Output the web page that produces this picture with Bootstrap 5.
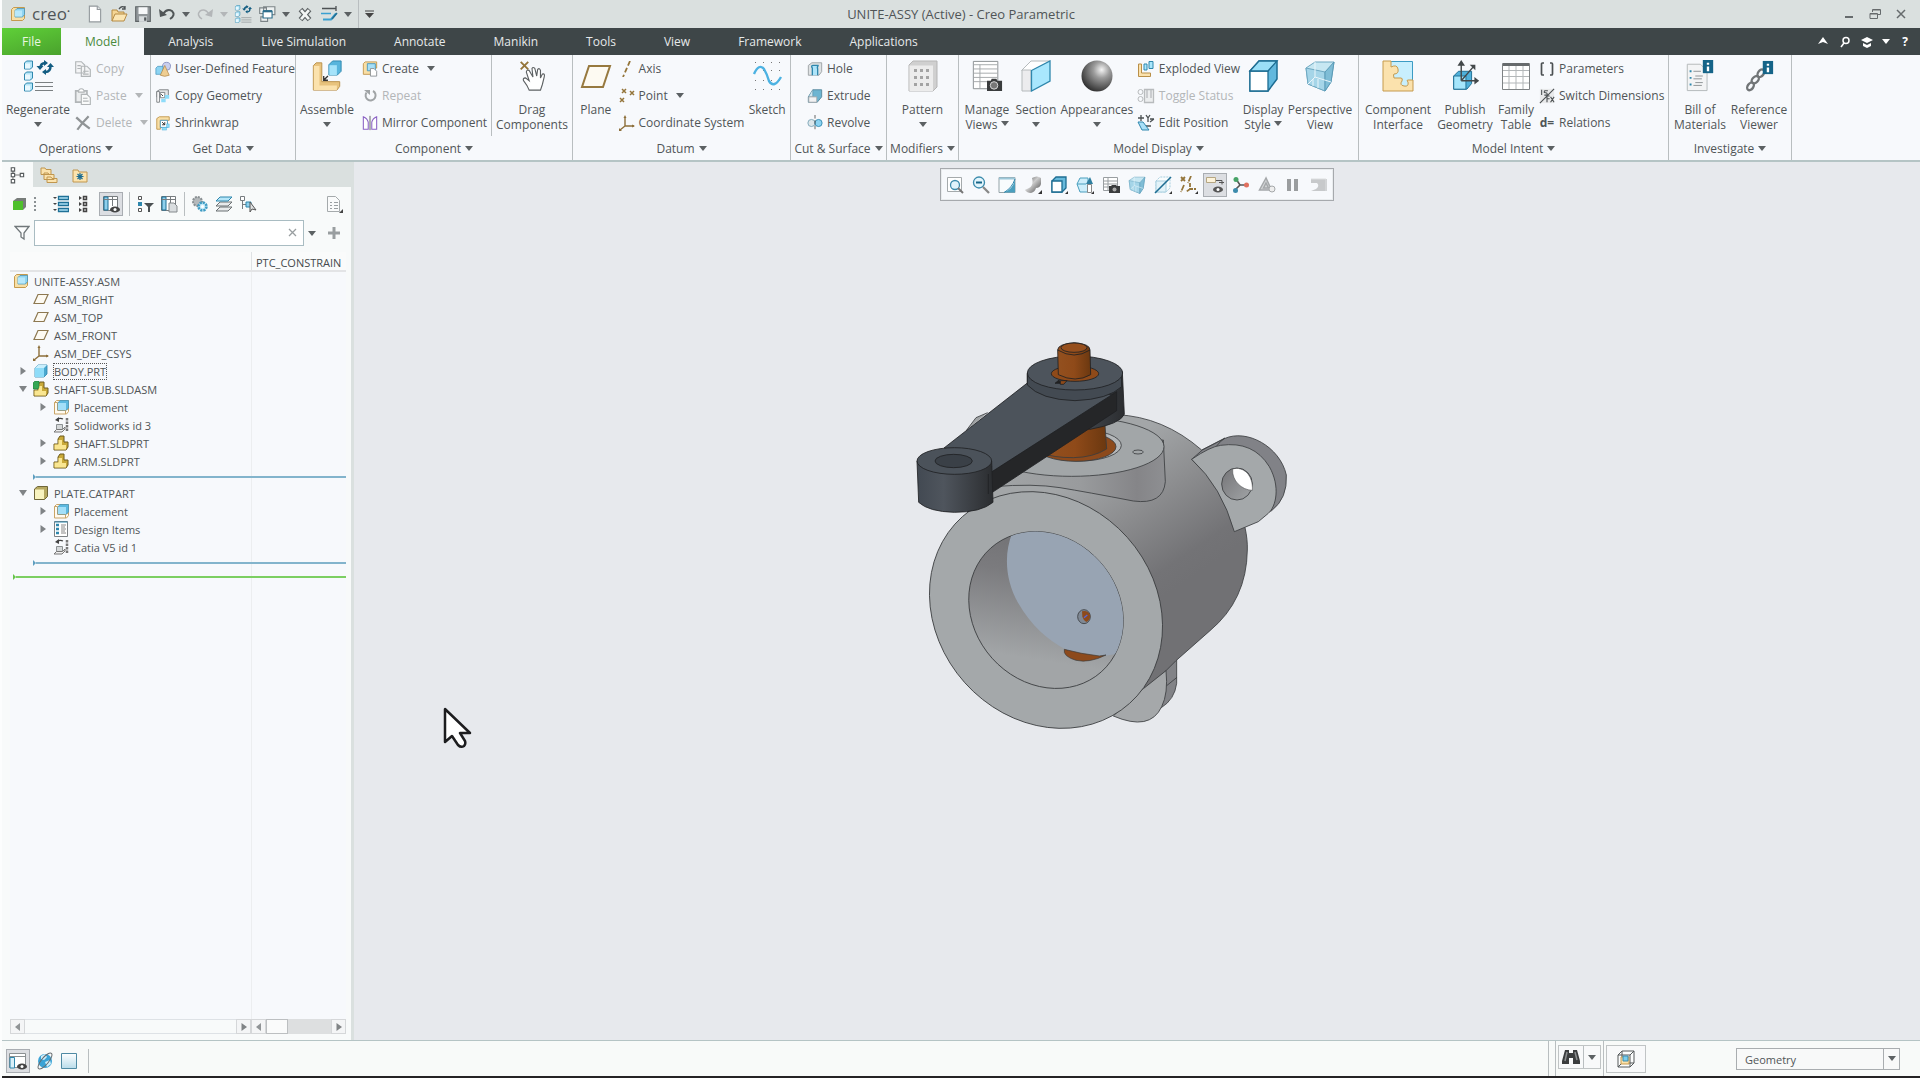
<!DOCTYPE html>
<html lang="en">
<head>
<meta charset="utf-8">
<meta name="viewport" content="width=device-width, initial-scale=1">
<title>UNITE-ASSY (Active) - Creo Parametric</title>
<link href="https://cdn.jsdelivr.net/npm/bootstrap@5.3.0/dist/css/bootstrap.min.css" rel="stylesheet">
<style>
:root{--ink:#505557;--panel:#f8fafa;--rib:#f7f9fc;--bar:#dae0df;--line:#b5c4c5}
body{font-family:"Open Sans","Noto Sans",sans-serif;font-size:12px;line-height:15px;color:var(--ink);background:#fcfdfd}
button{background:none;border:0;padding:0;color:inherit;font:inherit}
svg{flex:none;display:block}
.app-shell{border-bottom:2px solid #252325;margin-left:2px}
.i16{width:16px;height:16px}.i18{width:18px;height:18px}.i32{width:32px;height:32px}
.tri{display:inline-block;width:0;height:0;border:4px solid transparent;border-top:5px solid #5c6163;border-bottom:0;flex:none}
.dim{color:#b3b6b8}.dim .tri{border-top-color:#b3b6b8}
.titlebar{background:var(--bar);height:28px}
.titlebar h1{font-size:13px;line-height:28px}
.qat{left:8px;top:0;height:28px;gap:6px}
.brand{font-size:17px;line-height:24px;width:48px}
.brand sup{font-size:8px;top:-6px}
.duo{gap:6px}
.wc{right:13px;top:0;height:28px;gap:14px}
.menubar{background:#3e4648;height:27px}
.menubar a{color:#e6e9ea;text-decoration:none;line-height:28px;height:27px;padding:0 24px}
.menubar a.m-file{background:linear-gradient(165deg,#5fd038,#4aa22d);padding:0 20px;color:#e9f7e0}
.menubar a.m-on{background:var(--rib);color:#4a8a3c}
.ribbon{background:var(--rib);height:107px;border-bottom:2px solid var(--line)}
.rgroup{border-right:1px solid #b9bec0}
.rbody{height:81px}
.rfoot{height:25px;gap:4px}
.big{padding-top:5px;display:flex;flex-direction:column;align-items:center;text-align:center}
.big .lbl{margin-top:10px}
.big > .tri{margin-top:5px}
.big .lbl .tri{margin-bottom:3px}
.sm{display:flex;align-items:center;gap:4px;height:27px;white-space:nowrap}
.sm .tri{margin-left:4px}
.vsep{width:1px;background:#b9bec0}
.w42{width:42px}.w46{width:46px}.w50{width:50px}.w56{width:56px}.w62{width:62px}.w68{width:68px}.w72{width:72px}.w78{width:78px}.w80{width:80px}
.g-ops{width:149px}.g-get{width:145px}.g-comp{width:277px}.g-dat{width:218px}.g-cut{width:96px}.g-mod{width:72px}.g-disp{width:400px}.g-int{width:310px}.g-inv{width:123px}
.work{height:calc(100vh - 200px);min-height:600px}
.side{width:352px;background:var(--panel);border-right:3px solid var(--bar)}
.sidetabs{background:var(--bar);height:25px}
.sidetabs button{width:31px;display:flex;align-items:center;justify-content:center}
.sidetabs button.on{background:var(--panel)}
.sidetools{height:33px;padding-left:9px;gap:6px}
.tog{background:#dcdee2;border:1px solid #a9adb2;width:24px;height:24px;display:flex;align-items:center;justify-content:center}
.tool-sep{width:1px;height:24px;background:#b9bec0}
.findrow{height:26px;padding-left:12px;gap:4px}
.findbox{border:1px solid #a9bcc2;background:#fff;width:270px;height:26px;position:relative}
.findbox input{border:0;width:100%;height:24px;padding:0 24px 0 6px;outline:0;background:transparent}
.findbox button{position:absolute;right:6px;top:4px}
.tree{margin:6px 5px 0 8px;background:var(--rib);font-size:11px}
.thead{height:20px;border-bottom:2px solid #e3e4e6;background:#fafbfb;color:#454a4c}
.thead div:last-child{width:95px;border-left:1px solid #dfe2e4;padding:3px 0 0 4px;white-space:nowrap}
.tbody-area{background:linear-gradient(90deg,transparent calc(100% - 95px),#eceef0 calc(100% - 95px),#eceef0 calc(100% - 94px),transparent calc(100% - 94px))}
.tree ul{list-style:none;margin:0;padding:0}
.tree li{display:flex;align-items:center;height:18px;gap:5px}
.l0{padding-left:3px}.l1{padding-left:7px}.l2{padding-left:27px}
.arw{width:11px;height:18px;display:flex;align-items:center;justify-content:center}
.arw svg{width:8px;height:8px}
.focus-name{outline:1px dotted #555;line-height:15px}
.ins{height:14px;padding-left:23px;display:flex;align-items:center}
.ins.root{padding-left:3px}
.ins i{width:0;height:0;border:3px solid transparent;border-left:3px solid #5f9fc0;border-right:0}
.ins b{flex:1;height:2px;background:#83b4cc}
.ins.root i{border-left-color:#67c44b}.ins.root b{background:#7ccf62}
.sbar{height:15px;margin:0 5px 6px 8px}
.sbar .bx{border:1px solid #d5d7d9;display:flex;align-items:center;justify-content:center;width:15px;background:#f4f5f6}
.sbar .thumb{width:22px;border:1px solid #bcbfc1;background:#fafbfb}
.sbar .trk{width:43px;background:#dddfe0}
.canvas-area{background:#e7e9ed}
.viewbar{margin-top:6px;border:1px solid #a6a9ad;background:var(--rib);height:33px;padding:0 1px;box-shadow:inset 0 0 0 1px #e9ecee}
.viewbar button{width:26px;height:24px;display:flex;align-items:center;justify-content:center}
.viewbar button.tog{width:24px;margin:0 1px}
.assy{position:absolute;left:calc(50% - 237px);top:158px;width:420px;height:420px}
.ptr{position:absolute;left:89px;top:545px;width:30px;height:42px}
.status{height:36px;border-top:1px solid var(--line);background:#f8faf9}
.stleft{gap:6px;padding:4px 0 0 4px}
.stbtn{border:1px solid #c0c4c5;background:#f8f9fa;display:flex;align-items:center;justify-content:center}
.stright{gap:2px}
.geo{width:164px;height:22px;border:1px solid #a9adb0;background:linear-gradient(#a9adb0,#a9adb0) calc(100% - 15px) 0/1px 100% no-repeat,#f8f9f9;appearance:none;padding:0 8px;color:var(--ink);font-size:11px;border-radius:0}
.geobox{position:relative;margin:7px 20px 0 88px}
.geobox .tri{position:absolute;right:4px;top:8px;pointer-events:none}
</style>
<script src="https://cdn.jsdelivr.net/npm/bootstrap@5.3.0/dist/js/bootstrap.bundle.min.js"></script>
</head>
<body>
<svg width="0" height="0" class="position-absolute" aria-hidden="true">
<defs>
<radialGradient id="gS" cx=".65" cy=".3" r=".75"><stop offset="0" stop-color="#f4f4f4"/><stop offset=".35" stop-color="#9c9c9c"/><stop offset="1" stop-color="#2e2e2e"/></radialGradient>
<linearGradient id="gM" x1="0" y1="0" x2="1" y2="1"><stop offset="0" stop-color="#555"/><stop offset=".45" stop-color="#ccc"/><stop offset="1" stop-color="#444"/></linearGradient>
<linearGradient id="gW" x1="0" y1="0" x2="0" y2="1"><stop offset="0" stop-color="#fff"/><stop offset="1" stop-color="#b9dcea"/></linearGradient>
</defs>
<symbol id="cube" viewBox="0 0 16 16"><path d="M2 5l3-3h9v9l-3 3H2z" fill="#4aa8cf" stroke="#2c86ae" stroke-width=".8"/><path d="M2 5l3-3h9l-3 3z" fill="#c9effd"/><path d="M2 5h9v9H2z" fill="#8fdcf8"/></symbol>
<symbol id="asm" viewBox="0 0 16 16"><path d="M1.500 3.500l2-2h11v11l-2 2h-11z" fill="#f8dfa6" stroke="#c59a4d"/><path d="M5 4.500l2-2h7.500v6l-2 2.500H5z" fill="#8fd4f2" stroke="#4795bb" stroke-width=".8"/><path d="M5 4.500h7v6H5z" fill="#b8e8fb"/></symbol>
<symbol id="plc" viewBox="0 0 16 16"><path d="M1.500 3.500l2-2h12v11l-2 2.500h-12zM1.500 3.500h3v8h8l3-2M12.500 11.500V15" fill="#fffaf0" stroke="#c9a566"/><path d="M5 4l2-2.500h8.500V9l-2 2H5z" fill="#5cb9e0" stroke="#4795bb" stroke-width=".8"/><path d="M5 4h8v7H5z" fill="#a3dff8"/></symbol>
<symbol id="page" viewBox="0 0 16 16"><path d="M3 1h7l3 3v11H3z" fill="#fff" stroke="#93999d"/><path d="M10 1v3h3" fill="#e5e8ea" stroke="#93999d"/></symbol>
<symbol id="open" viewBox="0 0 18 18"><path d="M2 16V5h5l1 2h6v3" fill="#f5d695" stroke="#b58b45"/><path d="M2 16l3-7h12l-3 7z" fill="#fbe6b4" stroke="#b58b45"/><path d="M9 4q3-4 6-1m0-2v3h-3" fill="none" stroke="#4d5254" stroke-width="1.300"/></symbol>
<symbol id="save" viewBox="0 0 16 16"><path d="M1.500 1.500h13v13h-13z" fill="#91979a" stroke="#5f6567"/><path d="M4 2h8v6H4z" fill="#f7f9fa"/><path d="M4.500 10h7v5h-7z" fill="#d7dcde"/><path d="M9 11h2v3H9z" fill="#555b5d"/></symbol>
<symbol id="undo" viewBox="0 0 18 16"><path d="M5 8q4-6 9-3 4 4-2 8" fill="none" stroke="currentColor" stroke-width="2"/><path d="M1 3l1 8 7-2z" fill="currentColor"/></symbol>
<symbol id="redo" viewBox="0 0 18 16"><path d="M13 8Q9 2 4 5q-4 4 2 8" fill="none" stroke="currentColor" stroke-width="1.500"/><path d="M17 3l-1 8-7-2z" fill="currentColor"/></symbol>
<symbol id="regen" viewBox="0 0 32 32"><g stroke="#2f87ad" fill="#b5e6f9"><path d="M2.500 3l2-2h6v6l-2 2h-6zM2.500 14l2-2h6v6l-2 2h-6zM2.500 25l2-2h6v6l-2 2h-6z"/></g><path d="M3 3.500h5v5H3zM3 14.500h5v5H3zM3 25.500h5v5H3z" fill="#e9f8fe"/><path d="M13 22.500h18M13 26.500h18M13 30.500h18" stroke="#7b8082"/><path d="M18.500 8q0-5 5-5M28.500 6q0 6-5 6" fill="none" stroke="#135d82" stroke-width="2.500"/><path d="M22 0v6l4-3zM24 15V9l-4 3zM14.500 6h7l-3.500 4zM25 7h7l-3.500-4z" fill="#135d82"/></symbol>
<symbol id="wins" viewBox="0 0 16 16"><path d="M5 1.500h10v7H5zM1.500 2.500h6v5h-6zM2.500 10.500h6v4h-6z" fill="#edf1f1" stroke="#7c8487"/><path d="M4.500 5.500h8v6h-8z" fill="#fff" stroke="#2d6e8c"/><path d="M4.500 5.500h8" stroke="#2d6e8c" stroke-width="2"/></symbol>
<symbol id="closew" viewBox="0 0 16 16"><path d="M4 4l8 9M12 4l-8 9" stroke="#5c6163" stroke-width="4.500"/><path d="M4.500 4.500l7 8M11.500 4.500l-7 8" stroke="#f3f5f5" stroke-width="2.500"/></symbol>
<symbol id="sect" viewBox="0 0 18 16"><path d="M2 2.500h14M16 0v5" stroke="#4c5153" stroke-width="1.300"/><path d="M1 7.500h10" stroke="#3aa0d1" stroke-width="1.500"/><path d="M3 13.500h8l5-6" stroke="#3aa0d1" stroke-width="2" fill="none"/><path d="M12 13l5-6" stroke="#236f93" stroke-width="1.500"/></symbol>
<symbol id="copy" viewBox="0 0 16 16"><path d="M1.500 1.500h5l3 3v7h-8zM6.500 5.500h5l3 3v6h-8z" fill="#f4f5f6" stroke="#b1b5b7"/><path d="M3 5h3M3 7.500h3M8 10h5M8 12.500h5" stroke="#b1b5b7"/></symbol>
<symbol id="paste" viewBox="0 0 16 16"><path d="M1.500 3.500h10v10h-10z" fill="#eceeef" stroke="#b1b5b7" stroke-width="1.500"/><path d="M4 4.500q0-3 2.500-3T9 4.500z" fill="#fff" stroke="#b1b5b7"/><path d="M6.500 6.500h5l3 3v6h-8z" fill="#f9fafa" stroke="#b1b5b7"/><path d="M8 10h4M8 12.500h5" stroke="#b1b5b7"/></symbol>
<symbol id="del" viewBox="0 0 16 16"><path d="M2 3q5 5 12 10M13 2Q7 8 3 14" stroke="#909496" stroke-width="2" fill="none"/></symbol>
<symbol id="udf" viewBox="0 0 18 18"><circle cx="13" cy="6" r="4.500" fill="#c9cfee" stroke="#8790bf"/><path d="M1 8l2-2h6v7l-2 2H1z" fill="#8cd4f3" stroke="#4795bb" stroke-width=".8"/><path d="M11 5l5 11q-5 2.500-10 0z" fill="#efce92" stroke="#ae8646" stroke-width=".8"/></symbol>
<symbol id="cgeo" viewBox="0 0 18 18"><path d="M2 4l3-2h10v8H2z" fill="#e4e6e7" stroke="#777c7f"/><path d="M2 4h3v12H2zM6 5h5v6H6z" fill="#fff" stroke="#777c7f"/><path d="M7 7l2 2" stroke="#222"/><path d="M11 8h5v4h-4v4H7v-4h4z" fill="#8edcf9"/></symbol>
<symbol id="shr" viewBox="0 0 18 18"><path d="M2 4l3-2h11v4H6v10H2z" fill="#f9dfa5" stroke="#c09549"/><path d="M6 6h8v8H6z" fill="#fff" stroke="#4795bb"/><path d="M8 8l3 3m0-3v3H8" stroke="#222" fill="none"/><path d="M13 10h3v4h-3v3H8v-3h5z" fill="#8edcf9" stroke="#4cb0da" stroke-width=".5"/></symbol>
<symbol id="assem" viewBox="0 0 32 34"><path d="M1.500 6l3-3h6v20h19v5l-3 4h-25z" fill="#e8c37d" stroke="#b98f48"/><path d="M2 6.500h6V27h18.500v5H2z" fill="#fbe2ad"/><path d="M18 5l4-4h9v11l-4 4h-9z" fill="#58b5dd" stroke="#2c86ae"/><path d="M18.500 5.500h8V16h-8z" fill="#a5e3fa"/><path d="M17 17l-4 4m-.5-4v4.500H17" fill="none" stroke="#333" stroke-width="1.400"/></symbol>
<symbol id="creat" viewBox="0 0 18 18"><path d="M1.500 3l2-2h13v7h-5v7h-10z" fill="#f9dfa5" stroke="#c09549"/><path d="M6 3h9v8H6z" fill="#a5dff7" stroke="#4795bb"/><path d="M9.500 8.500h4l3 3v5.500h-7z" fill="#fff" stroke="#888e91"/></symbol>
<symbol id="rept" viewBox="0 0 16 16"><path d="M11 3a5 5 0 1 1-6.500 1.500" fill="none" stroke="#a0a4a6" stroke-width="2"/><path d="M2 2h6v5z" fill="#a0a4a6"/></symbol>
<symbol id="mirr" viewBox="0 0 18 18"><path d="M1.500 2v14H7V8Q6 4 1.500 2zM16.500 2v14H11V8q1-4 5.500-6z" fill="#fff" stroke="#8b62c4" stroke-width="1.200"/><path d="M9 1v16" stroke="#555"/></symbol>
<symbol id="drag" viewBox="0 0 32 34"><path d="M4 2l8 8M12 2l-8 8" stroke="#94753a" stroke-width="2"/><path d="M13 32q-2-5-6-10-1-3 2-3l4 3-3-9q0-3 3-2l4 7-1-9q1-2 3 0l2 8 1-7q2-2 3 1l0 8 2-4q3-1 2 3l-2 8-2 6z" fill="#fff" stroke="#5d6163" stroke-width="1.200"/></symbol>
<symbol id="plane" viewBox="0 0 32 32"><path d="M9 6h21L23 27H2z" fill="#fdfaf2" stroke="#97793f" stroke-width="2"/></symbol>
<symbol id="plane2" viewBox="0 0 16 16"><path d="M5 3.500h10L11 12.500H1z" fill="#fdfaf2" stroke="#8d7850" stroke-width="1.200"/></symbol>
<symbol id="axis" viewBox="0 0 16 16"><path d="M11 0L4 16" stroke="#94753a" stroke-width="1.800" stroke-dasharray="5 2.500"/></symbol>
<symbol id="point" viewBox="0 0 16 16"><path d="M3 1l4 4M7 1L3 5M11 3l4 4m0-4l-4 4M1 10l4 4m0-4l-4 4" stroke="#94753a" stroke-width="1.500"/></symbol>
<symbol id="csys" viewBox="0 0 16 16"><path d="M6 2v9h9M6 11l-5 4" fill="none" stroke="#8d6f3a" stroke-width="1.400"/><path d="M4.500 3L6 0l1.500 3zM13 9.500l3 1.500-3 1.500zM0 13v3h3z" fill="#8d6f3a"/></symbol>
<symbol id="sketch" viewBox="0 0 32 32"><g fill="#777"><path d="M4 2h1v1H4zM12 2h1v1h-1zM20 2h1v1h-1zM28 2h1v1h-1zM4 10h1v1H4zM12 10h1v1h-1zM20 10h1v1h-1zM28 10h1v1h-1zM4 20h1v1H4zM12 20h1v1h-1zM20 20h1v1h-1zM28 20h1v1h-1zM4 29h1v1H4zM12 29h1v1h-1zM20 29h1v1h-1zM28 29h1v1h-1z"/></g><path d="M3 14q5-11 10-5 3 5 5 12 5 8 12-4" fill="none" stroke="#4cb2e2" stroke-width="2.400"/></symbol>
<symbol id="hole" viewBox="0 0 18 18"><path d="M1.500 5l4-3h11v10l-3 4h-12z" fill="#dfe2e3" stroke="#9a9fa2"/><path d="M6 16V8q-2-3 1-3h6q-2 1-1 4v7" fill="#aee4f9" stroke="#2f87ad" stroke-width="1.500"/></symbol>
<symbol id="extr" viewBox="0 0 18 18"><path d="M1.500 10l5-8h10v8l-5 6h-10z" fill="#6db5d1" stroke="#53859a"/><path d="M6.500 2v8H2" fill="#cfe8f2" stroke="#53859a" stroke-width=".6"/><path d="M2 10h9v6H2z" fill="#f1f2f3" stroke="#a2a7a9"/></symbol>
<symbol id="revo" viewBox="0 0 18 18"><circle cx="5" cy="9" r="4" fill="#dce6ea" stroke="#79a4b6"/><circle cx="13" cy="9" r="4" fill="#8bd3f2" stroke="#2f87ad"/><path d="M9 0v18" stroke="#555" stroke-dasharray="4 2"/></symbol>
<symbol id="patt" viewBox="0 0 32 32"><path d="M2 5l4-4h24v26l-4 4H2z" fill="#d0d0d0" stroke="#b5b5b5"/><path d="M2.500 5.500H26V31H2.500z" fill="#ececec"/><path d="M7 9h3v3H7zM13 9h3v3h-3zM19 9h3v3h-3zM7 16h3v3H7zM13 16h3v3h-3zM19 16h3v3h-3zM7 23h3v3H7zM13 23h3v3h-3zM19 23h3v3h-3z" fill="#a3a3a3"/></symbol>
<symbol id="mview" viewBox="0 0 32 34"><path d="M1.500 1.500h26v29h-26z" fill="#fff" stroke="#888d90"/><path d="M2 5h25M2 9.500h25M2 14h25M2 18.500h25M2 23h25M8.500 5v25" stroke="#a3a8aa"/><path d="M16 22h4l1-2h5l1 2h5v11H16z" fill="#3a3c3d"/><circle cx="23.500" cy="27" r="4" fill="#777" stroke="#ddd"/></symbol>
<symbol id="section" viewBox="0 0 32 32"><path d="M2 10L11 1h19L12 11H2z" fill="#fff" stroke="#b5babc"/><path d="M2 10h9v21H2z" fill="#ececee" stroke="#b5babc"/><path d="M11.500 10.500L30 1v20L11.500 31z" fill="#a9e7fd" stroke="#2f87ad" stroke-width="1.300"/></symbol>
<symbol id="ball" viewBox="0 0 32 32"><circle cx="16" cy="16" r="15.500" fill="url(#gS)"/></symbol>
<symbol id="expl" viewBox="0 0 18 18"><path d="M1.500 4H4.500v9h9v3.500h-12z" fill="#fbe2ad" stroke="#b98f48"/><path d="M7 4h3v6H7zM12 1.500h4v7h-4z" fill="#a9e7fd" stroke="#2f87ad"/></symbol>
<symbol id="tstat" viewBox="0 0 18 18"><circle cx="3.500" cy="5" r="2.500" fill="none" stroke="#b8bbbd"/><circle cx="3.500" cy="12" r="2.500" fill="none" stroke="#b8bbbd"/><path d="M7.500 2.500h9v13h-9zM10 3v8M14 3v8" fill="#eceeef" stroke="#b8bbbd" stroke-width="1.300"/></symbol>
<symbol id="epos" viewBox="0 0 18 18"><path d="M4 1v6M1 4h6M9 1l2 3v4m2-7l-2 3M13 5h4M13 8l4-3M9 12h5" stroke="#4b5052" stroke-width="1.300" fill="none"/><path d="M1 8h5l6 8H5z" fill="#a9e0f8" stroke="#2f87ad"/></symbol>
<symbol id="dstyle" viewBox="0 0 32 32"><path d="M3 11L12 1h18v18L21 31H3z" fill="#62b8dd" stroke="#1e6d92" stroke-width="1.500"/><path d="M3 11h18v20H3z" fill="#fff" stroke="#1e6d92" stroke-width="1.300"/><path d="M3 11L12 1h18l-9 10z" fill="#9adff7" stroke="#1e6d92" stroke-width="1.300"/></symbol>
<symbol id="persp" viewBox="0 0 32 32"><path d="M2 8l9-6h19l-3 20-6 9L4 24z" fill="#c7e7f2" stroke="#6fa9c2"/><path d="M2 8l19 4v19L4 24z" fill="#a5d5e8" stroke="#6fa9c2"/><path d="M21 12l9-10-3 20-6 9z" fill="#7fbdd6" stroke="#5b9bb7"/><path d="M11 2v15l-7 7M11 17l16 5M9 19v7M14 19v9" fill="none" stroke="#eaf6fb"/></symbol>
<symbol id="cint" viewBox="0 0 32 32"><path d="M1.500 1.500h29v29h-29z" fill="#c8effd" stroke="#3c9cc4"/><path d="M1 1h8v6q6-3 7 2t-4 5q-1 0 0 4h7q2 0 1 3-3 4 2 5t4-4q-2-2 0-2h5v11H1z" fill="#fbe2ad" stroke="#c59a4d"/></symbol>
<symbol id="pgeo" viewBox="0 0 32 34"><path d="M4 17l5-5h14v13l-5 6H4z" fill="#4fb0da" stroke="#1e6d92"/><path d="M4 17h13v14H4z" fill="#a5e6fc" stroke="#1e6d92"/><path d="M12 22V4M12 22L25 7M12 22h18" stroke="#43484a" stroke-width="1.500"/><path d="M8 6l4-6 4 6zM21 5h6v6zM26 18l5 4-5 4z" fill="#43484a"/></symbol>
<symbol id="ftab" viewBox="0 0 32 32"><path d="M2.500 3.500h27v26h-27z" fill="#fff" stroke="#7e8284"/><path d="M3 4.500h26" stroke="#666a6c" stroke-width="3"/><path d="M3 10.500h26M3 16.500h26M3 23h26M9 6v23M16 6v23M23 6v23" stroke="#b3b7b9"/></symbol>
<symbol id="para" viewBox="0 0 16 16"><path d="M5 2H3.500Q2.500 2 2.500 3v10q0 1 1 1H5M11 2h1.500q1 0 1 1v10q0 1-1 1H11" fill="none" stroke="#4b5052" stroke-width="1.700"/></symbol>
<symbol id="swd" viewBox="0 0 18 18"><path d="M1 1h16v16H1z" fill="#e9eaeb"/><path d="M1 17L17 1M3 2v6M6 3h4M6 3v2q4 0 3 3H6M9 16V9h3m-3 3h3M13 10l4 6m0-6l-4 6" stroke="#4b5052" stroke-width="1.200" fill="none"/></symbol>
<symbol id="bom" viewBox="0 0 32 34"><path d="M2.500 4.500h14l7 7v21h-21z" fill="#f3f4f5" stroke="#b2b7b9"/><path d="M5 12h2M5 19h2M5 26h2" stroke="#2f87ad" stroke-width="2"/><path d="M9 12h8M11 17h8M9 20h9M11 24h8M9 27h9" stroke="#8b9092"/><path d="M19 0h11v14H19z" fill="#156488"/><path d="M24.500 3v2M24.500 7v5" stroke="#fff" stroke-width="2.500"/></symbol>
<symbol id="refv" viewBox="0 0 32 34"><g fill="none" stroke="#717577" stroke-width="2.500"><ellipse cx="7" cy="28" rx="3" ry="4.500" transform="rotate(35 7 28)"/><ellipse cx="12" cy="21" rx="3" ry="4.500" transform="rotate(45 12 21)"/><ellipse cx="18" cy="14" rx="3" ry="4.500" transform="rotate(35 18 14)"/></g><path d="M20 1h11v14H20z" fill="#156488"/><path d="M25.500 4v2M25.500 8v5" stroke="#fff" stroke-width="2.500"/></symbol>
<symbol id="tmod" viewBox="0 0 16 16"><path d="M3.500 1v12M3 8h8" stroke="#777"/><path d="M2 1.500h3v3H2zM2 6.500h3v3H2zM2 12h3v3H2zM10 6.500h3v3h-3z" fill="#fff" stroke="#565b5d"/></symbol>
<symbol id="fold" viewBox="0 0 18 18"><path d="M1 2h4l1 1.500h5v5H1zM4 7h4l1 1.500h5v5H4zM7 11h4l1 1.500h5v4H7z" fill="#fbe3ae" stroke="#c0964e"/></symbol>
<symbol id="fav" viewBox="0 0 18 18"><path d="M2 4h5l1 2h8v10H2z" fill="#fbe3ae" stroke="#c0964e"/><path d="M9 7v7M5.500 10.500h7M6.500 8l5 5M11.500 8l-5 5" stroke="#1c6d92" stroke-width="1.200"/></symbol>
<symbol id="gcube" viewBox="0 0 16 16"><path d="M2 5l4-3h9v9l-3 3z" fill="#777c79"/><path d="M2 5h10v9H2z" fill="#4fc02c"/></symbol>
<symbol id="lst" viewBox="0 0 18 18"><path d="M7.500 1.500h10v3h-10zM7.500 7.500h10v3h-10zM7.500 13.500h10v3h-10z" fill="#aee0f5" stroke="#1f7197" stroke-width="1.300"/><path d="M2 2h4L4 4zM2 8h4l-2 2zM2 14h4l-2 2z" fill="#444"/></symbol>
<symbol id="lst2" viewBox="0 0 18 18"><path d="M8.500 1.500h3v3h-3zM8.500 7.500h3v3h-3zM8.500 13.500h3v3h-3z" fill="#ddd" stroke="#444" stroke-width="1.500"/><path d="M4 1l3 2-3 2zM4 7l3 2-3 2zM4 13l3 2-3 2z" fill="#444"/></symbol>
<symbol id="cols" viewBox="0 0 18 18"><path d="M1.500 1.500h14v14h-14z" fill="#fff" stroke="#777c7f"/><path d="M2 2h4v13H2z" fill="#8fd0ec" stroke="#1f7197"/><path d="M2 4.500h13M10.500 2v9" stroke="#777c7f"/></symbol>
<symbol id="eye" viewBox="0 0 18 18"><use href="#cols"/><ellipse cx="13" cy="14.500" rx="5" ry="3" fill="#444"/><circle cx="13" cy="14.500" r="1.500" fill="#fff"/></symbol>
<symbol id="navi" viewBox="0 0 18 18"><path d="M.5 1.500h16v14H.5z" fill="#fff" stroke="#8b9092"/><path d="M.5 4.500h16" stroke="#8b9092"/><path d="M1 5.500h4.500V16H1z" fill="#d9eff8" stroke="#2f87ad"/><ellipse cx="13" cy="14.500" rx="5" ry="3" fill="#444"/><circle cx="13" cy="14.500" r="1.500" fill="#fff"/></symbol>
<symbol id="colpg" viewBox="0 0 18 18"><use href="#cols"/><path d="M9 8h5l3 3v6H9z" fill="#d9dddf" stroke="#84898c"/></symbol>
<symbol id="tfil" viewBox="0 0 18 18"><path d="M2.500 1.500h3v3h-3zM2.500 13.500h3v3h-3z" fill="#fff" stroke="#555"/><path d="M2 7h4v4H2z" fill="#2f87ad"/><path d="M8 8h10l-4 4v5h-2v-5z" fill="#4b5052"/></symbol>
<symbol id="gear" viewBox="0 0 18 18"><circle cx="6.500" cy="6.500" r="4.500" fill="#b5b9bb" stroke="#8a9093" stroke-width="2" stroke-dasharray="2 1"/><circle cx="11.500" cy="11.500" r="4" fill="#c6ebf9" stroke="#3f9cc4" stroke-width="2.500" stroke-dasharray="2.200 .9"/><circle cx="11.500" cy="11.500" r="1.500" fill="#fff"/></symbol>
<symbol id="layer" viewBox="0 0 18 18"><path d="M1 16l4-4h12l-4 4zM1 11l4-4h12l-4 4z" fill="#e8eaeb" stroke="#6b7072"/><path d="M1 6l4-4h12l-4 4z" fill="#b5e6f9" stroke="#2f87ad"/></symbol>
<symbol id="tsel" viewBox="0 0 18 18"><path d="M1.500 1.500h4v4h-4zM3.500 6v8M4 9.500h4" fill="#fff" stroke="#777c7f"/><path d="M7 7h5v5H7z" fill="#8fd0ec" stroke="#2f87ad"/><path d="M11 7l6 8-4-1-2 3z" fill="#dfe2e3" stroke="#555"/></symbol>
<symbol id="pglst" viewBox="0 0 18 18"><path d="M2.500 1.500h8l4 4v11h-12z" fill="#fafbfb" stroke="#a5aaac"/><path d="M5 7.500h2M9 7.500h4M5 10.500h2M9 10.500h4M5 13.500h2M9 13.500h4" stroke="#9a9fa2"/><path d="M18 14v4h-4z" fill="#444"/></symbol>
<symbol id="funnel" viewBox="0 0 16 16"><path d="M1 1.500h14L10 8v6l-3-2V8z" fill="#fcfdfd" stroke="#70777a" stroke-width="1.300"/></symbol>
<symbol id="sw" viewBox="0 0 16 16"><path d="M1 9h4V4l2-3h4v6h4v5l-2 3H1z" fill="#c9a938" stroke="#6d5a1e"/><path d="M1.500 9.500h4V5h3.500v5H13v4.500H1.500z" fill="#f9e691"/></symbol>
<symbol id="swa" viewBox="0 0 16 16"><use href="#sw"/><path d="M0 2l2-2h4v6l-1 2H0z" fill="#35a755" stroke="#1c7838" stroke-width=".6"/></symbol>
<symbol id="impf" viewBox="0 0 16 16"><path d="M4 2.500q3-2 6-.5" fill="none" stroke="#444" stroke-width="1.300"/><path d="M2 3l4-3v5z" fill="#444"/><path d="M3.500 7.500h6v5h-6z" fill="#d5d8d9" stroke="#8b9092"/><path d="M1 15l2.500-2.500h6L12 10v2l-3 3z" fill="#eee" stroke="#777"/><path d="M14 1v14" stroke="#777" stroke-width="2.500" stroke-dasharray="2.500 1"/></symbol>
<symbol id="cat" viewBox="0 0 16 16"><path d="M1.500 4l3-2.500h10v10l-3 3h-10z" fill="#b5a860" stroke="#6f6638"/><path d="M2 4.500h9V14H2z" fill="#f8f3bf"/></symbol>
<symbol id="ditem" viewBox="0 0 16 16"><path d="M1.500 .5h13v15h-13z" fill="#fff" stroke="#7c8184"/><path d="M3 4h3M3 8h3M3 12h3" stroke="#2f87ad" stroke-width="2.500"/><path d="M8 4h5M8 6h4M8 8h5M8 10h4M8 12h5" stroke="#888"/><path d="M1.500 1h13" stroke="#2f87ad"/></symbol>
<symbol id="zfit" viewBox="0 0 18 18"><path d="M1.500 1.500h14v14h-14z" fill="#fff" stroke="#a5aaac"/><circle cx="9" cy="9" r="4.500" fill="#dff3fb" stroke="#3c8bac" stroke-width="1.300"/><path d="M12 12l5 5" stroke="#777" stroke-width="2"/></symbol>
<symbol id="zout" viewBox="0 0 18 18"><circle cx="7" cy="6.500" r="5.500" fill="#e3f5fc" stroke="#3c8bac" stroke-width="1.300"/><path d="M4 6.500h6" stroke="#156488" stroke-width="2"/><path d="M11 11l6 6" stroke="#888" stroke-width="2.300"/></symbol>
<symbol id="repnt" viewBox="0 0 18 18"><path d="M1 1.500h16v15H1z" fill="#f8fcfd" stroke="#94a3a9"/><path d="M1 1.500h16v2H1z" fill="#9cc7d8"/><path d="M17 4v12.500H6Q15 13 17 4z" fill="#4a9fbe"/><path d="M17 3Q14 12 6 16.500" stroke="#2f87ad" fill="none"/></symbol>
<symbol id="shade" viewBox="0 0 18 18"><path d="M8 2q5-3 9 0v6q-1 4-5 4-1 4-5 5-4 0-6-3l4-2q5-3 3-10z" fill="url(#gM)"/><path d="M18 14v4h-4z" fill="#333"/></symbol>
<symbol id="wire" viewBox="0 0 18 18"><path d="M2 5l4-4h10v11l-4 4H2z" fill="#67b9db" stroke="#1e6d92" stroke-width="1.300"/><path d="M2 5h10v11H2z" fill="#fff" stroke="#1e6d92" stroke-width="1.300"/><path d="M18 15v3h-3z" fill="#333"/></symbol>
<symbol id="orient" viewBox="0 0 18 18"><path d="M1 8l3-6h8v14H4z" fill="#cdeefb" stroke="#4a9fbe"/><path d="M1 8h9" stroke="#4a9fbe"/><path d="M10 8l4-7 3 7z" fill="#2f7fa0"/><path d="M11.500 8.500h4v8h-4z" fill="#fff" stroke="#888"/><path d="M18 15v3h-3z" fill="#333"/></symbol>
<symbol id="mv2" viewBox="0 0 18 18"><path d="M1.500 1.500h14v13h-14zM2 5h13M2 8h13M2 11h13M6 2v12" fill="#fff" stroke="#999ea1"/><path d="M7 10h2l1-1h4l1 1h3v7H7z" fill="#3a3c3d"/><circle cx="12.500" cy="13.500" r="2" fill="#aaa"/></symbol>
<symbol id="dsec" viewBox="0 0 18 18"><path d="M2 5l4-4h10v11l-4 4H2z" fill="#f8fcfd" stroke="#a8cfdf" stroke-dasharray="2 1"/><path d="M2 5h10v11H2z" fill="#e3f3f9" stroke="#a8cfdf"/><path d="M1 17L17 1" stroke="#1e6d92" stroke-width="1.600"/><path d="M18 15v3h-3z" fill="#333"/></symbol>
<symbol id="dfil" viewBox="0 0 18 18"><path d="M1 1l4 4m0-4L1 5M11 0L8 7M4 9l-3 7" stroke="#94753a" stroke-width="1.800" fill="none" stroke-dasharray="6 1"/><path d="M10 7v6h6M10 13l-4 3" stroke="#94753a" stroke-width="1.800" fill="none" stroke-dasharray="4 1"/><path d="M18 15v3h-3z" fill="#333"/></symbol>
<symbol id="annd" viewBox="0 0 18 18"><path d="M.5 1.500h9v5h-9z" fill="#fdf3da" stroke="#b5a683"/><path d="M10 4.500h6v4m-3-2h5" fill="none" stroke="#555"/><ellipse cx="12" cy="13.500" rx="5" ry="3" fill="#555"/><circle cx="12" cy="13.500" r="1.500" fill="#fff"/></symbol>
<symbol id="spin" viewBox="0 0 18 18"><path d="M4 3l4 6h6M8 9l-5 5" stroke="#555" stroke-width="1.600" fill="none"/><circle cx="4" cy="3.500" r="2.500" fill="#47a367"/><circle cx="14.500" cy="9" r="2.500" fill="#e0705f"/><circle cx="3.500" cy="14.500" r="2.500" fill="#3c8bac"/></symbol>
<symbol id="sim" viewBox="0 0 18 18"><path d="M8 2L1.500 14h12zM8 7l-2.500 5h5z" fill="#d4d6d8" stroke="#a5a8aa" stroke-width="1.500"/><circle cx="14" cy="13" r="3" fill="#eee" stroke="#a5a8aa"/></symbol>
<symbol id="paus" viewBox="0 0 18 18"><path d="M3 3h4v12H3zM10 3h4v12h-4z" fill="#9a9d9f"/></symbol>
<symbol id="simr" viewBox="0 0 18 18"><path d="M1 3h16v12H1l5-2q4-3 1-6H1z" fill="#c7c9cb"/><path d="M1 3h15v12" fill="none" stroke="#dcdee0"/></symbol>
<symbol id="globe" viewBox="0 0 18 18"><circle cx="9" cy="9" r="7" fill="#3aa3d6"/><path d="M5 4l4-2 2 3-3 3-3-1zM9 10l5-2 1 4-4 3z" fill="#cdeefb"/><ellipse cx="9" cy="9" rx="10" ry="3.500" transform="rotate(-50 9 9)" fill="none" stroke="#666b6e"/></symbol>
<symbol id="bino" viewBox="0 0 18 16"><path d="M3 1h4v3h4V1h4l3 11v3h-7V9H7v6H0v-3z" fill="#3b3d3e"/><path d="M5 3L3 12M13 3l2 8" stroke="#8b8e90" stroke-width="1.500"/></symbol>
<symbol id="wcube" viewBox="0 0 18 18"><path d="M1 5l4-4h12v12l-4 4H1z M1 5h12v12M13 5l4-4M5 1v12h12M5 13l-4 4" fill="#fcfdfd" stroke="#54595b"/><path d="M4 7h8v7H4z" fill="#fbe2ad" stroke="#c59a4d"/><path d="M6 6h5v5H6z" fill="#78cdf0" stroke="#3c8bac"/></symbol>
<symbol id="tr" viewBox="0 0 8 8"><path d="M1.500 0v8l5.500-4z" fill="#808486"/></symbol>
<symbol id="td" viewBox="0 0 8 8"><path d="M0 1h8L4 7z" fill="#808486"/></symbol>
<symbol id="tl" viewBox="0 0 8 8"><path d="M6 0v8L1 4z" fill="#909496"/></symbol>
</svg>

<div class="app-shell d-flex flex-column min-vh-100">
<header>
 <div class="titlebar position-relative text-center">
  <div class="qat position-absolute d-flex align-items-center">
   <svg class="i16"><use href="#asm"/></svg><span class="brand text-start">creo<sup>•</sup></span>
   <button aria-label="New"><svg class="i18"><use href="#page"/></svg></button>
   <button aria-label="Open"><svg class="i18"><use href="#open"/></svg></button>
   <button aria-label="Save"><svg class="i18"><use href="#save"/></svg></button>
   <button aria-label="Undo" class="duo d-flex align-items-center"><svg class="i18"><use href="#undo"/></svg><span class="tri"></span></button>
   <button aria-label="Redo" class="duo dim d-flex align-items-center"><svg class="i18"><use href="#redo"/></svg><span class="tri"></span></button>
   <button aria-label="Regenerate"><svg class="i18"><use href="#regen"/></svg></button>
   <button aria-label="Windows" class="duo d-flex align-items-center"><svg class="i18"><use href="#wins"/></svg><span class="tri"></span></button>
   <button aria-label="Close"><svg class="i18"><use href="#closew"/></svg></button>
   <button aria-label="Section" class="duo d-flex align-items-center"><svg class="i18"><use href="#sect"/></svg><span class="tri"></span></button>
   <span class="vsep align-self-stretch"></span>
   <button aria-label="Customize"><svg width="9" height="9"><path d="M0 1h9" stroke="#444"/><path d="M0 3h9L4.500 8z" fill="#444"/></svg></button>
  </div>
  <h1 class="m-0 fw-normal">UNITE-ASSY (Active) - Creo Parametric</h1>
  <div class="wc position-absolute d-flex align-items-center">
   <button aria-label="Minimize"><svg width="12" height="12"><path d="M2 9h8" stroke="#666b6d" stroke-width="2"/></svg></button>
   <button aria-label="Restore"><svg width="12" height="12"><path d="M3.500 4V1.500h8v5H9M1 5.500h7.500v5H1zM1 6h7M4 2h7" fill="none" stroke="#666b6d"/></svg></button>
   <button aria-label="Exit"><svg width="12" height="12"><path d="M2 2l8 8M10 2l-8 8" stroke="#666b6d" stroke-width="1.500"/></svg></button>
  </div>
 </div>
 <nav class="menubar d-flex">
  <a href="#" class="m-file">File</a><a href="#" class="m-on">Model</a><a href="#">Analysis</a><a href="#">Live Simulation</a><a href="#">Annotate</a><a href="#">Manikin</a><a href="#">Tools</a><a href="#">View</a><a href="#">Framework</a><a href="#">Applications</a>
  <div class="ms-auto d-flex align-items-center gap-2 pe-1">
   <button aria-label="Collapse"><svg width="14" height="14"><path d="M2 9l5-7 5 7-5-2z" fill="#fff"/></svg></button>
   <button aria-label="Search"><svg width="14" height="14"><circle cx="8" cy="5.500" r="3" fill="none" stroke="#fff" stroke-width="1.500"/><path d="M6 8l-3 4" stroke="#fff" stroke-width="1.500"/></svg></button>
   <button aria-label="Learning" class="d-flex align-items-center gap-2"><svg width="14" height="14"><path d="M1 5l6-3 6 3-6 3zM3 8l4 2 4-2v3l-4 2-4-2z" fill="#fff"/></svg><svg width="8" height="8"><path d="M0 1h8L4 6z" fill="#fff"/></svg></button>
   <button class="text-white fw-bold px-1 me-1" aria-label="Help">?</button>
  </div>
 </nav>
 <div class="ribbon d-flex">
  <section class="rgroup g-ops"><div class="rbody d-flex">
    <button class="big w72"><svg class="i32"><use href="#regen"/></svg><span class="lbl">Regenerate</span><span class="tri"></span></button>
    <div><button class="sm dim"><svg class="i18"><use href="#copy"/></svg>Copy</button><button class="sm dim"><svg class="i18"><use href="#paste"/></svg>Paste<span class="tri"></span></button><button class="sm dim"><svg class="i18"><use href="#del"/></svg>Delete<span class="tri"></span></button></div>
  </div><div class="rfoot d-flex align-items-center justify-content-center">Operations<span class="tri"></span></div></section>
  <section class="rgroup g-get"><div class="rbody ps-1">
    <button class="sm"><svg class="i16"><use href="#udf"/></svg>User-Defined Feature</button><button class="sm"><svg class="i16"><use href="#cgeo"/></svg>Copy Geometry</button><button class="sm"><svg class="i16"><use href="#shr"/></svg>Shrinkwrap</button>
  </div><div class="rfoot d-flex align-items-center justify-content-center">Get Data<span class="tri"></span></div></section>
  <section class="rgroup g-comp"><div class="rbody d-flex">
    <button class="big w62"><svg class="i32"><use href="#assem"/></svg><span class="lbl">Assemble</span><span class="tri"></span></button>
    <div class="ps-1"><button class="sm"><svg class="i16"><use href="#creat"/></svg>Create<span class="tri"></span></button><button class="sm dim"><svg class="i16"><use href="#rept"/></svg>Repeat</button><button class="sm"><svg class="i16"><use href="#mirr"/></svg>Mirror Component</button></div>
    <span class="vsep ms-auto"></span>
    <button class="big w80"><svg class="i32"><use href="#drag"/></svg><span class="lbl">Drag<br>Components</span></button>
  </div><div class="rfoot d-flex align-items-center justify-content-center">Component<span class="tri"></span></div></section>
  <section class="rgroup g-dat"><div class="rbody d-flex">
    <button class="big w46"><svg class="i32"><use href="#plane"/></svg><span class="lbl">Plane</span></button>
    <div><button class="sm"><svg class="i16"><use href="#axis"/></svg>Axis</button><button class="sm"><svg class="i16"><use href="#point"/></svg>Point<span class="tri"></span></button><button class="sm"><svg class="i16"><use href="#csys"/></svg>Coordinate System</button></div>
    <button class="big w46 mx-auto"><svg class="i32"><use href="#sketch"/></svg><span class="lbl">Sketch</span></button>
  </div><div class="rfoot d-flex align-items-center justify-content-center">Datum<span class="tri"></span></div></section>
  <section class="rgroup g-cut"><div class="rbody ps-3">
    <button class="sm"><svg class="i16"><use href="#hole"/></svg>Hole</button><button class="sm"><svg class="i16"><use href="#extr"/></svg>Extrude</button><button class="sm"><svg class="i16"><use href="#revo"/></svg>Revolve</button>
  </div><div class="rfoot d-flex align-items-center justify-content-center">Cut &amp; Surface<span class="tri"></span></div></section>
  <section class="rgroup g-mod"><div class="rbody">
    <button class="big w-100"><svg class="i32"><use href="#patt"/></svg><span class="lbl">Pattern</span><span class="tri"></span></button>
  </div><div class="rfoot d-flex align-items-center justify-content-center">Modifiers<span class="tri"></span></div></section>
  <section class="rgroup g-disp"><div class="rbody d-flex">
    <button class="big w56"><svg class="i32"><use href="#mview"/></svg><span class="lbl">Manage<br>Views <span class="tri"></span></span></button>
    <button class="big w42"><svg class="i32"><use href="#section"/></svg><span class="lbl">Section</span><span class="tri"></span></button>
    <button class="big w80"><svg class="i32"><use href="#ball"/></svg><span class="lbl">Appearances</span><span class="tri"></span></button>
    <div><button class="sm"><svg class="i18"><use href="#expl"/></svg>Exploded View</button><button class="sm dim"><svg class="i18"><use href="#tstat"/></svg>Toggle Status</button><button class="sm"><svg class="i18"><use href="#epos"/></svg>Edit Position</button></div>
    <button class="big w46 ms-auto"><svg class="i32"><use href="#dstyle"/></svg><span class="lbl">Display<br>Style <span class="tri"></span></span></button>
    <button class="big w68 me-1"><svg class="i32"><use href="#persp"/></svg><span class="lbl">Perspective<br>View</span></button>
  </div><div class="rfoot d-flex align-items-center justify-content-center">Model Display<span class="tri"></span></div></section>
  <section class="rgroup g-int"><div class="rbody d-flex">
    <button class="big w78"><svg class="i32"><use href="#cint"/></svg><span class="lbl">Component<br>Interface</span></button>
    <button class="big w56"><svg class="i32"><use href="#pgeo"/></svg><span class="lbl">Publish<br>Geometry</span></button>
    <button class="big w46"><svg class="i32"><use href="#ftab"/></svg><span class="lbl">Family<br>Table</span></button>
    <div><button class="sm"><svg class="i16"><use href="#para"/></svg>Parameters</button><button class="sm"><svg class="i16"><use href="#swd"/></svg>Switch Dimensions</button><button class="sm"><b class="i16">d=</b>Relations</button></div>
  </div><div class="rfoot d-flex align-items-center justify-content-center">Model Intent<span class="tri"></span></div></section>
  <section class="rgroup g-inv"><div class="rbody d-flex">
    <button class="big w62"><svg class="i32"><use href="#bom"/></svg><span class="lbl">Bill of<br>Materials</span></button>
    <button class="big w56"><svg class="i32"><use href="#refv"/></svg><span class="lbl">Reference<br>Viewer</span></button>
  </div><div class="rfoot d-flex align-items-center justify-content-center">Investigate<span class="tri"></span></div></section>
 </div>
</header>

<main class="work flex-fill d-flex">
 <aside class="side d-flex flex-column">
  <div class="sidetabs d-flex"><button class="on" aria-label="Model Tree"><svg class="i18"><use href="#tmod"/></svg></button><button aria-label="Folders"><svg class="i18"><use href="#fold"/></svg></button><button aria-label="Favorites"><svg class="i18"><use href="#fav"/></svg></button></div>
  <div class="sidetools d-flex align-items-center">
   <svg class="i16"><use href="#gcube"/></svg><svg width="12" height="16"><path d="M2 1v14" stroke="#8a9093" stroke-width="2" stroke-dasharray="2 2"/></svg>
   <button aria-label="Expand"><svg class="i18"><use href="#lst"/></svg></button><button aria-label="Collapse"><svg class="i18"><use href="#lst2"/></svg></button>
   <button class="tog" aria-label="Columns"><svg class="i18"><use href="#eye"/></svg></button><span class="tool-sep"></span>
   <button aria-label="Filter"><svg class="i18"><use href="#tfil"/></svg></button><button aria-label="Tree columns"><svg class="i18"><use href="#colpg"/></svg></button><span class="tool-sep"></span>
   <button aria-label="Settings"><svg class="i18"><use href="#gear"/></svg></button><button aria-label="Layers"><svg class="i18"><use href="#layer"/></svg></button><button aria-label="Select"><svg class="i18"><use href="#tsel"/></svg></button>
   <button class="ms-auto me-2" aria-label="Tree options"><svg class="i18"><use href="#pglst"/></svg></button>
  </div>
  <div class="findrow d-flex align-items-center">
   <svg class="i16"><use href="#funnel"/></svg>
   <div class="findbox"><input type="text" aria-label="Search tree"><button aria-label="Clear"><svg width="9" height="15"><path d="M1 4l7 7M8 4l-7 7" stroke="#999ea0" stroke-width="1.300"/></svg></button></div>
   <button class="d-flex me-2" aria-label="Search options"><span class="tri"></span></button>
   <button aria-label="Add"><svg width="12" height="12"><path d="M6 0v12M0 6h12" stroke="#999ea0" stroke-width="3"/></svg></button>
  </div>
  <div class="tree flex-fill d-flex flex-column">
   <div class="thead d-flex"><div class="flex-fill"></div><div>PTC_CONSTRAIN</div></div>
   <div class="tbody-area flex-fill">
   <ul>
    <li class="l0"><svg class="i16"><use href="#asm"/></svg>UNITE-ASSY.ASM</li>
    <li class="l1"><span class="arw"></span><svg class="i16"><use href="#plane2"/></svg>ASM_RIGHT</li>
    <li class="l1"><span class="arw"></span><svg class="i16"><use href="#plane2"/></svg>ASM_TOP</li>
    <li class="l1"><span class="arw"></span><svg class="i16"><use href="#plane2"/></svg>ASM_FRONT</li>
    <li class="l1"><span class="arw"></span><svg class="i16"><use href="#csys"/></svg>ASM_DEF_CSYS</li>
    <li class="l1"><button class="arw" aria-label="Expand"><svg><use href="#tr"/></svg></button><svg class="i16"><use href="#cube"/></svg><span class="focus-name">BODY.PRT</span></li>
    <li class="l1"><button class="arw" aria-label="Collapse"><svg><use href="#td"/></svg></button><svg class="i16"><use href="#swa"/></svg>SHAFT-SUB.SLDASM</li>
    <li class="l2"><button class="arw" aria-label="Expand"><svg><use href="#tr"/></svg></button><svg class="i16"><use href="#plc"/></svg>Placement</li>
    <li class="l2"><span class="arw"></span><svg class="i16"><use href="#impf"/></svg>Solidworks id 3</li>
    <li class="l2"><button class="arw" aria-label="Expand"><svg><use href="#tr"/></svg></button><svg class="i16"><use href="#sw"/></svg>SHAFT.SLDPRT</li>
    <li class="l2"><button class="arw" aria-label="Expand"><svg><use href="#tr"/></svg></button><svg class="i16"><use href="#sw"/></svg>ARM.SLDPRT</li>
   </ul>
   <div class="ins"><i></i><b></b></div>
   <ul>
    <li class="l1"><button class="arw" aria-label="Collapse"><svg><use href="#td"/></svg></button><svg class="i16"><use href="#cat"/></svg>PLATE.CATPART</li>
    <li class="l2"><button class="arw" aria-label="Expand"><svg><use href="#tr"/></svg></button><svg class="i16"><use href="#plc"/></svg>Placement</li>
    <li class="l2"><button class="arw" aria-label="Expand"><svg><use href="#tr"/></svg></button><svg class="i16"><use href="#ditem"/></svg>Design Items</li>
    <li class="l2"><span class="arw"></span><svg class="i16"><use href="#impf"/></svg>Catia V5 id 1</li>
   </ul>
   <div class="ins"><i></i><b></b></div>
   <div class="ins root"><i></i><b></b></div>
   </div>
  </div>
  <div class="sbar d-flex"><span class="bx"><svg width="8" height="8"><use href="#tl"/></svg></span><span class="flex-fill border-top border-bottom"></span><span class="bx"><svg width="8" height="8"><use href="#tr"/></svg></span><span class="bx"><svg width="8" height="8"><use href="#tl"/></svg></span><span class="thumb"></span><span class="trk"></span><span class="bx"><svg width="8" height="8"><use href="#tr"/></svg></span></div>
 </aside>
 <div class="canvas-area flex-fill position-relative">
  <div class="d-flex justify-content-center"><div class="viewbar d-flex align-items-center">
   <button aria-label="Refit"><svg class="i18"><use href="#zfit"/></svg></button><button aria-label="Zoom Out"><svg class="i18"><use href="#zout"/></svg></button><button aria-label="Repaint"><svg class="i18"><use href="#repnt"/></svg></button><button aria-label="Rendering"><svg class="i18"><use href="#shade"/></svg></button><button aria-label="Display Style"><svg class="i18"><use href="#wire"/></svg></button><button aria-label="Orientations"><svg class="i18"><use href="#orient"/></svg></button><button aria-label="View Manager"><svg class="i18"><use href="#mv2"/></svg></button><button aria-label="Perspective"><svg class="i18"><use href="#persp"/></svg></button><button aria-label="Sections"><svg class="i18"><use href="#dsec"/></svg></button><button aria-label="Datum Display"><svg class="i18"><use href="#dfil"/></svg></button><button class="tog" aria-label="Annotations"><svg class="i18"><use href="#annd"/></svg></button><button aria-label="Spin Center"><svg class="i18"><use href="#spin"/></svg></button><button aria-label="Simulation"><svg class="i18"><use href="#sim"/></svg></button><button aria-label="Pause"><svg class="i18"><use href="#paus"/></svg></button><button aria-label="Results"><svg class="i18"><use href="#simr"/></svg></button>
  </div></div>
  <svg class="assy" viewBox="0 0 1260 1260" role="img" aria-label="Valve assembly">
   <defs>
    <linearGradient id="body" gradientUnits="userSpaceOnUse" x1="600" y1="420" x2="850" y2="790"><stop offset="0" stop-color="#a3a6a8"/><stop offset=".4" stop-color="#8d8e90"/><stop offset=".85" stop-color="#737376"/><stop offset="1" stop-color="#717174"/></linearGradient>
    <linearGradient id="bore" gradientUnits="userSpaceOnUse" x1="240" y1="760" x2="470" y2="1040"><stop offset="0" stop-color="#737376"/><stop offset=".3" stop-color="#7b7b7e"/><stop offset="1" stop-color="#a2a5a7"/></linearGradient>
    <linearGradient id="boss" x1="0" x2="1" y1="0" y2="0"><stop offset="0" stop-color="#a3a6a8"/><stop offset=".55" stop-color="#999b9d"/><stop offset=".85" stop-color="#858588"/><stop offset="1" stop-color="#8e8f92"/></linearGradient>
    <linearGradient id="cop" x1="0" x2="1" y1="0" y2="0"><stop offset="0" stop-color="#93501f"/><stop offset=".5" stop-color="#8f4a19"/><stop offset="1" stop-color="#6b3810"/></linearGradient>
    <linearGradient id="hub" x1="0" x2="1" y1="0" y2="0"><stop offset="0" stop-color="#424952"/><stop offset=".35" stop-color="#4f555d"/><stop offset="1" stop-color="#2b2d30"/></linearGradient>
    <linearGradient id="bh" x1="0" x2="1" y1="0" y2="1"><stop offset="0" stop-color="#747477"/><stop offset="1" stop-color="#a2a5a7"/></linearGradient>
    <clipPath id="inner"><ellipse cx="438" cy="870" rx="249" ry="217" transform="rotate(48.200 438 870)"/></clipPath>
   </defs>
   <g stroke="#3a3c3e" stroke-width="2.500" stroke-linejoin="round">
    <path d="M830 1015v75q-6 48-46 73l-60-40z" fill="#828387"/>
    <path d="M650 284Q790 290 905 390C1000 490 1045 610 1042 690Q1040 840 930 932L828 1022 740 1110 200 570 420 400z" fill="url(#body)"/>
    <path d="M640 1188Q750 1235 785 1160 805 1120 798 1052L700 1130z" fill="#a5a8aa"/><path d="M800 1097l31-25" fill="none"/>
    <path d="M200 330l28-37 35-15" fill="#a0a3a5"/>
    <path d="M875 418l32-28 66-34C1040 325 1140 380 1159 465Q1163 535 1115 572l-60 20z" fill="#818287"/>
    <path d="M875 418Q930 380 962 376 1060 362 1108 440C1142 500 1128 560 1105 580L1075 605 1003 635Q965 500 875 418z" fill="#a4a8aa"/><path d="M905 390l70-36q-15 10-25 24" fill="none"/>
    <ellipse cx="1011" cy="492" rx="46" ry="48" fill="url(#bh)"/><path d="M998 447C1030 438 1060 465 1057 511 1025 510 995 482 998 447z" fill="#fff" stroke-width="1.500"/>
    <path d="M280 500Q400 490 480 503T700 543Q790 555 796 485L790 360 230 420z" fill="url(#boss)"/>
    <ellipse cx="515" cy="380" rx="277" ry="89" fill="#a2a6a8"/>
    <ellipse cx="540" cy="376" rx="124" ry="47" fill="#b4b7b9"/><ellipse cx="528" cy="380" rx="120" ry="44" fill="#8d4a1c"/>
    <path d="M440 300h174l6 87q-40 25-100 26-60 0-90-13z" fill="url(#cop)"/>
    <ellipse cx="714" cy="396" rx="16" ry="6" fill="none"/>
    <ellipse cx="438" cy="870" rx="376" ry="327" transform="rotate(48.200 438 870)" fill="#a4a8aa"/>
    <ellipse cx="438" cy="870" rx="249" ry="217" transform="rotate(48.200 438 870)" fill="url(#bore)"/>
    <g clip-path="url(#inner)" stroke="none"><path d="M340 630C310 700 315 780 355 850Q410 945 500 990L610 1008 645 1003 720 900V600H350z" fill="#98a4b3"/><path d="M493 988q50 14 105 20l20-3q-50 25-90 16-40-12-35-33z" fill="#8d4a1c" stroke="#3a3c3e" stroke-width="2"/></g>
    <ellipse cx="552" cy="890" rx="19" ry="21" fill="#7f8894"/><path d="M546 874q20-4 25 14-2 14-12 18-8-4-12-16z" fill="#8d4a1c" stroke="none"/><path d="M552 893l10-8" stroke="#5665d6" stroke-width="4"/>
    <g stroke="#1f2123">
     <path d="M382 160V210Q420 300 570 328 660 312 673 283L667 155z" fill="url(#hub)"/>
     <path d="M400 175L132 384 275 440 268 462 640 226z" fill="#4c535b"/>
     <path d="M265 462L650 215V272L268 523z" fill="#252628"/>
     <path d="M382 160v35q40 44 143 47 100-4 140-42v-45z" fill="#434a52"/>
     <ellipse cx="525" cy="159" rx="143" ry="51" fill="#4d545c"/>
     <ellipse cx="525" cy="161" rx="71" ry="23" fill="#8f4a19"/><path d="M465 190l12-10 4 10z" fill="#222"/><path d="M481 182h20l-10 11h-10z" fill="#8f4a19"/>
     <path d="M473 90q0-18 50-22 48 4 47 22l2 74q-45 26-97 0z" fill="url(#cop)"/><path d="M473 90q50 30 97 0" fill="none"/><ellipse cx="522" cy="83" rx="39" ry="14" fill="#964f1d"/>
     <path d="M51 423l5 124q30 28 107 30 80 0 116-30l-4-124z" fill="url(#hub)"/>
     <ellipse cx="163" cy="423" rx="112" ry="40" fill="#4b525a"/><ellipse cx="161" cy="423" rx="56" ry="20" fill="#3a4047"/><path d="M265 462v60"/>
    </g>
   </g>
  </svg>
  <svg class="ptr" viewBox="0 0 30 42"><path d="M2 2v33l7-6 6 9q3 3 6 1 2-2 1-5l-5-8h10z" fill="#fff" stroke="#1d1d1f" stroke-width="2.500" stroke-linejoin="round"/></svg>
 </div>
</main>
<footer class="status d-flex">
 <div class="stleft d-flex align-items-center">
  <button class="tog" aria-label="Navigator"><svg class="i18"><use href="#navi"/></svg></button>
  <button aria-label="Browser"><svg class="i18"><use href="#globe"/></svg></button>
  <button aria-label="Full Screen"><svg width="18" height="18"><path d="M1.500 1.500h15v15h-15z" fill="url(#gW)" stroke="#4f8aa3"/></svg></button>
  <span class="tool-sep ms-1"></span>
 </div>
 <div class="stright ms-auto d-flex align-items-start">
  <span class="vsep align-self-stretch"></span><span class="vsep align-self-stretch ms-1"></span>
  <button class="stbtn mt-1" aria-label="Find"><svg width="24" height="22" viewBox="-3 -3 24 22"><use href="#bino" width="18" height="16"/></svg><span class="vsep align-self-stretch me-1"></span><span class="tri me-1"></span></button>
  <span class="vsep align-self-stretch"></span>
  <button class="stbtn mt-1 px-2 py-1" aria-label="Geometry selection"><svg width="22" height="18"><use href="#wcube"/></svg></button>
  <div class="geobox"><select class="geo" aria-label="Selection filter"><option>Geometry</option></select><span class="tri"></span></div>
 </div>
</footer>
</div>
</body>
</html>
